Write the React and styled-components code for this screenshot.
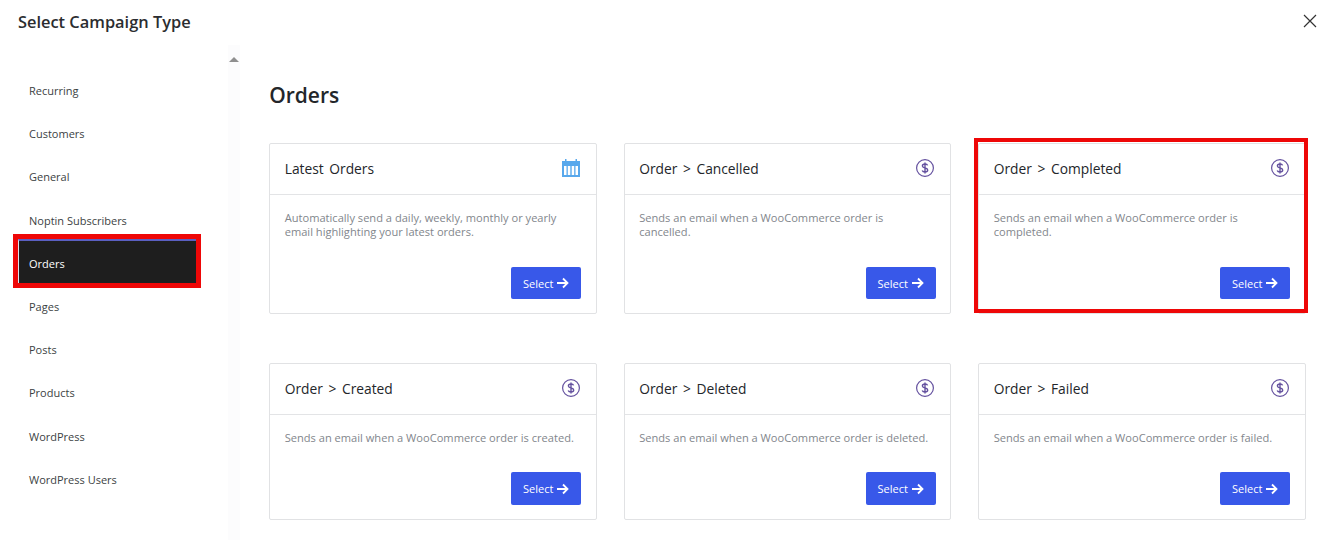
import React from "react";
import styled, { createGlobalStyle } from "styled-components";

const Global = createGlobalStyle`
  html, body { margin: 0; padding: 0; background: #fff; }
  body { font-family: "Open Sans", "Noto Sans", sans-serif; overflow: hidden; }
`;

const Page = styled.div`
  width: 1322px;
  height: 540px;
  display: flex;
  flex-direction: column;
  overflow: hidden;
`;

const Header = styled.header`
  height: 45px;
  flex: none;
  display: flex;
  align-items: center;
  justify-content: space-between;
  padding: 0 0 3px 18px;
  box-sizing: border-box;
`;

const Title = styled.h1`
  margin: 0;
  font-size: 16.4px;
  font-weight: 600;
  color: #2b2d30;
`;

const Close = styled.button`
  border: 0;
  background: none;
  padding: 0;
  width: 24px;
  height: 24px;
  display: flex;
  align-items: center;
  justify-content: center;
  color: #333;
`;

const Body = styled.div`
  flex: 1;
  display: flex;
  min-height: 0;
`;

const Sidebar = styled.nav`
  width: 240px;
  flex: none;
  display: flex;
`;

const Menu = styled.ul`
  list-style: none;
  margin: 0;
  padding: 24px 0 0 18px;
  width: 179px;
  flex: none;
`;

const MenuItem = styled.li`
  position: relative;
  height: 43.2px;
  display: flex;
  align-items: center;
  box-sizing: border-box;
  padding-left: 11px;
  font-size: 11px;
  color: ${(p) => (p.$active ? "#fff" : "#3c3f43")};
  background: ${(p) => (p.$active ? "#1e1e1e" : "transparent")};
  ${(p) =>
    p.$active &&
    `height: 45px;
     margin: -2.8px 0 1px;
     border: 1px solid #dfe0ee;
     border-top: 2px solid #5a5fc0;
     padding: 4px 0 0 10px;
     &::after {
       content: "";
       position: absolute;
       inset: -7px -5px -5px -6px;
       border: 5px solid #ee0707;
       pointer-events: none;
     }`}
`;

const Track = styled.div`
  margin-left: 31px;
  width: 12px;
  background: #fcfcfd;
  display: flex;
  justify-content: center;
  padding-top: 12px;
  box-sizing: border-box;
`;

const Arrow = styled.div`
  width: 0;
  height: 0;
  border-left: 5px solid transparent;
  border-right: 5px solid transparent;
  border-bottom: 5px solid #8f8f8f;
`;

const Main = styled.main`
  flex: 1;
  padding: 34px 0 0 29.200px;
  min-width: 0;
`;

const Heading = styled.h2`
  margin: 0 0 32px;
  font-size: 21px;
  line-height: 32px;
  font-weight: 600;
  color: #23262a;
`;

const Grid = styled.div`
  display: grid;
  grid-template-columns: repeat(3, 327.500px);
  column-gap: 27px;
  row-gap: 49px;
`;

const Card = styled.article`
  position: relative;
  box-sizing: border-box;
  height: ${(p) => (p.$tall ? "171px" : "157px")};
  border: 1px solid #e1e2e4;
  border-radius: 2px;
  background: #fff;
  display: flex;
  flex-direction: column;
  ${(p) =>
    p.$marked &&
    `&::after {
       content: "";
       position: absolute;
       inset: -6px -3px 0 -5px;
       border: 4.500px solid #ee0707;
       pointer-events: none;
     }`}
`;

const CardHead = styled.div`
  height: 51px;
  flex: none;
  box-sizing: border-box;
  border-bottom: 1px solid #e3e4e6;
  display: flex;
  align-items: center;
  justify-content: space-between;
  padding: 0 15px 2px 14.500px;
`;

const CardTitle = styled.h3`
  margin: 0;
  font-size: 13.800px;
  font-weight: 500;
  color: #23262a;
  word-spacing: 2px;
`;

const CardBody = styled.div`
  flex: 1;
  display: flex;
  flex-direction: column;
  justify-content: space-between;
  padding: 16px 14.500px 14px 14.500px;
`;

const Desc = styled.p`
  margin: 0;
  font-size: 11.100px;
  line-height: 14px;
  color: #82868c;
`;

const SelectButton = styled.button`
  align-self: flex-end;
  width: 70px;
  height: ${(p) => (p.$tall ? "32px" : "33px")};
  flex: none;
  border: 0;
  border-radius: 2px;
  background: #3858e9;
  color: #fff;
  font-family: inherit;
  font-size: 11px;
  display: flex;
  align-items: center;
  justify-content: center;
  gap: 3px;
  padding: 0;
`;

const CalendarIcon = () => (
  <svg width="20" height="20" viewBox="0 0 20 20" aria-hidden="true">
    <path fill="#58a8ec" d="M1 3h3V1h1.500v2h9V1H16v2h3v16H1z" />
    <path fill="#fff" d="M3 8h2.500v9H3zM6.800 8h2.500v9H6.800zM10.700 8h2.500v9h-2.500zM14.500 8H17v9h-2.500z" />
  </svg>
);

const DollarIcon = () => (
  <svg width="20" height="20" viewBox="0 0 20 20" fill="none" stroke="#64519f" aria-hidden="true">
    <circle cx="10" cy="10" r="8.400" strokeWidth="1.200" />
    <path strokeWidth="1.400" d="M12.600 7.400C12.300 6.500 11.300 6 10 6c-1.500 0-2.600.8-2.600 2 0 2.700 5.300 1.300 5.300 4 0 1.200-1.200 2-2.700 2-1.400 0-2.400-.6-2.800-1.600M10 4.400v11.200" />
  </svg>
);

const ArrowIcon = () => (
  <svg width="13" height="12" viewBox="0 0 13 12" fill="none" stroke="#fff" strokeWidth="1.800" aria-hidden="true">
    <path d="M1 6h10.500M7 1.500 11.500 6 7 10.500" />
  </svg>
);

const categories = [
  "Recurring", "Customers", "General", "Noptin Subscribers", "Orders",
  "Pages", "Posts", "Products", "WordPress", "WordPress Users",
];

const sends = (what) => `Sends an email when a WooCommerce order is ${what}.`;

const cards = [
  { title: "Latest Orders", icon: "calendar", tall: true, text: "Automatically send a daily, weekly, monthly or yearly email highlighting your latest orders." },
  { title: "Order > Cancelled", tall: true, text: sends("cancelled") },
  { title: "Order > Completed", tall: true, marked: true, text: sends("completed") },
  { title: "Order > Created", text: sends("created") },
  { title: "Order > Deleted", text: sends("deleted") },
  { title: "Order > Failed", text: sends("failed") },
];

export default function App() {
  return (
    <Page>
      <Global />
      <Header>
        <Title>Select Campaign Type</Title>
        <Close aria-label="Close">
          <svg width="14" height="14" viewBox="0 0 14 14" stroke="currentColor" strokeWidth="1.200" aria-hidden="true">
            <path d="M1 1l12 12M13 1 1 13" />
          </svg>
        </Close>
      </Header>
      <Body>
        <Sidebar>
          <Menu>
            {categories.map((c) => (
              <MenuItem key={c} $active={c === "Orders"}>{c}</MenuItem>
            ))}
          </Menu>
          <Track><Arrow /></Track>
        </Sidebar>
        <Main>
          <Heading>Orders</Heading>
          <Grid>
            {cards.map((card) => (
              <Card key={card.title} $tall={card.tall} $marked={card.marked}>
                <CardHead>
                  <CardTitle>{card.title}</CardTitle>
                  {card.icon === "calendar" ? <CalendarIcon /> : <DollarIcon />}
                </CardHead>
                <CardBody>
                  <Desc>{card.text}</Desc>
                  <SelectButton $tall={card.tall}>Select <ArrowIcon /></SelectButton>
                </CardBody>
              </Card>
            ))}
          </Grid>
        </Main>
      </Body>
    </Page>
  );
}
